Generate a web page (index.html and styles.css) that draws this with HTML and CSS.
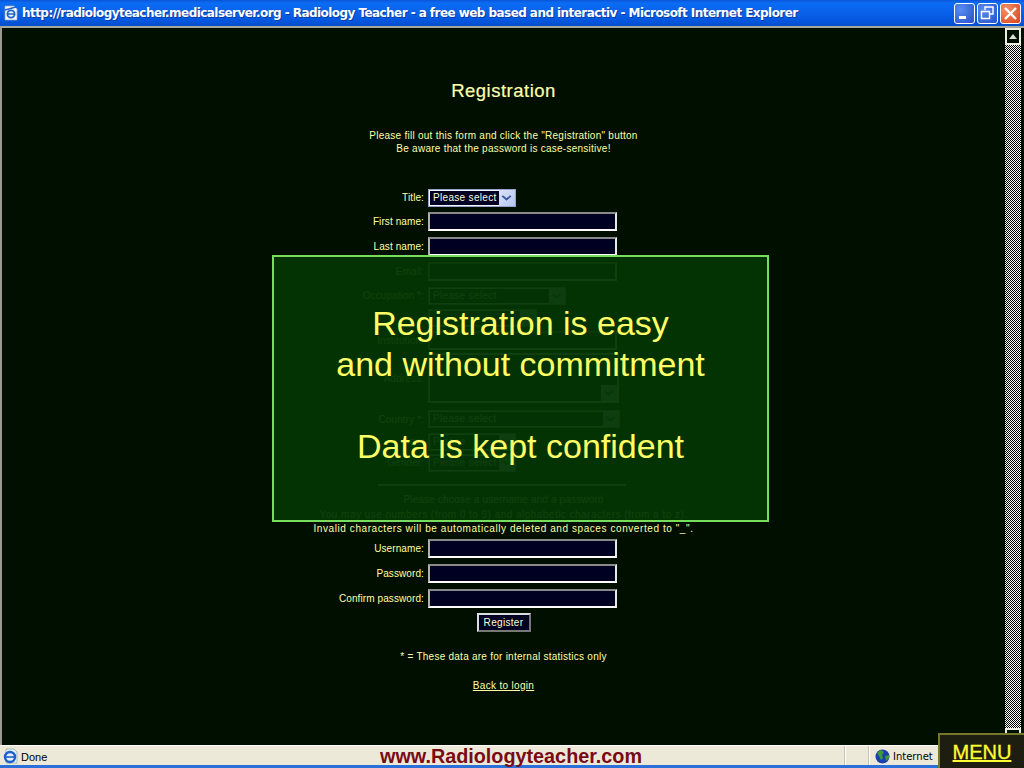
FILE: index.html
```html
<!DOCTYPE html>
<html lang="en">
<head>
<meta charset="utf-8">
<title>Radiology Teacher</title>
<link rel="stylesheet" href="styles.css">
</head>
<body>
<div class="window">
  <header class="titlebar">
    <svg class="ie-icon" width="16" height="16" viewBox="0 0 16 16"><path d="M2 1h9l3 3v11H2z" fill="#f4f6fb" stroke="#9ab" stroke-width=".7"/><circle cx="8" cy="9" r="3.600" fill="none" stroke="#1c62c8" stroke-width="1.800"/><path d="M4.500 9h7M2 5l11-3" stroke="#1c62c8" stroke-width="1.300"/></svg>
    <span class="title-text">http://radiologyteacher.medicalserver.org - Radiology Teacher - a free web based and interactiv - Microsoft Internet Explorer</span>
    <div class="win-buttons">
      <span class="win-btn"><svg width="21" height="21" viewBox="0 0 21 21"><rect x="5" y="13" width="7" height="3" fill="#fff"/></svg></span>
      <span class="win-btn"><svg width="21" height="21" viewBox="0 0 21 21"><path d="M8 7V4h8v7h-3M4.500 8.500h8v7h-8z" fill="none" stroke="#fff" stroke-width="1.400"/></svg></span>
      <span class="win-btn close"><svg width="21" height="21" viewBox="0 0 21 21"><path d="M5 5l11 11M16 5L5 16" stroke="#fff" stroke-width="2.400"/></svg></span>
    </div>
  </header>
  <div class="viewport">
    <main class="page">
      <h1 class="heading">Registration</h1>
      <p class="intro">Please fill out this form and click the "Registration" button<br>Be aware that the password is case-sensitive!</p>
      <form class="form">
        <div class="row r-23"><label>Title:</label><div class="select w88"><span>Please select</span><i class="arrow"></i></div></div>
        <div class="row"><label>First name:</label><div class="input"></div></div>
        <div class="row"><label>Last name:</label><div class="input"></div></div>
        <div class="row"><label>Email:</label><div class="input"></div></div>
        <div class="row r-23"><label>Occupation *:</label><div class="select w138"><span>Please select</span><i class="arrow"></i></div></div>
        <div class="row r-21"><label></label><div class="select w108"><span></span><i class="arrow"></i></div></div>
        <div class="row"><label>Institution:</label><div class="input"></div></div>
        <div class="row r-area"><label>Address:</label><div class="textarea"><i class="arrow"></i></div></div>
        <div class="row r-28"><label>Country *:</label><div class="select w192"><span>Please select</span><i class="arrow"></i></div></div>
        <div class="row r-21"><label>Age:</label><div class="select w88"><span>Please</span><i class="arrow"></i></div></div>
        <div class="row r-21"><label>Gender:</label><div class="select w88"><span>Please select</span><i class="arrow"></i></div></div>
        <hr class="rule">
        <p class="notes"><span class="n1">Please choose a username and a password</span><br><span class="n2">You may use numbers (from 0 to 9) and alphabetic characters (from a to z).</span><br><span class="n3">Invalid characters will be automatically deleted and spaces converted to "_".</span></p>
        <div class="row"><label>Username:</label><div class="input"></div></div>
        <div class="row"><label>Password:</label><div class="input"></div></div>
        <div class="row"><label>Confirm password:</label><div class="input"></div></div>
        <div class="submit"><button type="button" class="register">Register</button></div>
      </form>
      <p class="footnote">* = These data are for internal statistics only</p>
      <a class="back" href="#">Back to login</a>
    </main>
    <div class="scrollbar">
      <span class="sb-btn"><i class="tri-up"></i></span>
      <span class="sb-track"></span>
      <span class="sb-btn"></span>
    </div>
  </div>
  <footer class="statusbar">
    <svg class="st-icon" width="16" height="16" viewBox="0 0 16 16"><path d="M3 1h8l3 3v11H3z" fill="#e8eef8" stroke="#8aa" stroke-width=".7"/><circle cx="7" cy="9" r="5" fill="none" stroke="#1c62c8" stroke-width="2.400"/><path d="M3 9h8" stroke="#1c62c8" stroke-width="1.600"/></svg>
    <span class="done">Done</span>
    <span class="st-cell c1"></span><span class="st-cell c2"></span>
    <span class="zone"><svg width="15" height="15" viewBox="0 0 15 15"><circle cx="7.500" cy="7.500" r="7" fill="#1b3fb0"/><path d="M2 4l4-3 3 2-2 3 1 3-2 2-2-4zM10 7l4-1v3l-3 3z" fill="#3f9a3a"/></svg>Internet</span>
  </footer>
  <div class="bluestrip"></div>
</div>
<div class="overlay">
  <p>Registration is easy<br>and without commitment</p>
  <p>Data is kept confident</p>
</div>
<div class="site-name">www.Radiologyteacher.com</div>
<a class="menu" href="#">MENU</a>
</body>
</html>
```
FILE: styles.css
```css
* { box-sizing: border-box; }
html, body { margin: 0; padding: 0; height: 768px; overflow: hidden; }
body { position: relative; width: 1024px; font-family: "Liberation Sans", sans-serif; background: #000; }
.window { display: flex; flex-direction: column; height: 768px; }

.titlebar { height: 26px; flex: none; display: flex; align-items: center; padding-left: 3px; color: #fff;
  background: linear-gradient(#0a55d8 0, #0a6cf4 3px, #0a62ea 12px, #0454dc 22px, #0450c8 26px); }
.ie-icon { flex: none; }
.title-text { margin-left: 3px; font: bold 12px "DejaVu Sans", sans-serif; letter-spacing: -.555px; white-space: nowrap; text-shadow: 1px 1px #0a3aa0; }
.win-buttons { margin-left: auto; display: flex; gap: 2px; padding-right: 3px; }
.win-btn { width: 21px; height: 21px; border: 1px solid #fff; border-radius: 3px; display: block; overflow: hidden;
  background: radial-gradient(circle at 30% 30%, #5a8cf0, #2450c8); }
.win-btn svg { display: block; margin: -1px; }
.close { background: radial-gradient(circle at 30% 30%, #f0906a, #d8431c); }

.viewport { flex: 1; min-height: 0; display: flex; background: #000f00; border-top: 2px solid #a8a89c; border-left: 2px solid #9a9a90; padding-right: 3px; }
.page { flex: 1; min-width: 0; color: #ffffaa; font: 10px "Liberation Sans", sans-serif; text-align: center; }
.heading { margin: 50px 0 0; font: 400 18.500px/26px "Liberation Sans", sans-serif; letter-spacing: .5px; -webkit-text-stroke: .2px #ffffaa; }
.intro { margin: 25px 0 0; line-height: 13px; letter-spacing: .255px; }
.form { margin-top: 31px; }
.row { display: flex; gap: 4px; height: 25px; align-items: center; }
.row label { width: 422px; flex: none; text-align: right; letter-spacing: .1px; }
.input { width: 189px; height: 19px; background: #000022; border: 2px solid; border-color: #8a8a8a #e8e8e8 #fff #b0b0b0; }
.select { height: 18px; display: flex; background: #000022; border: 1px solid #93a3c8; box-shadow: inset 0 0 0 1px #f4f4ff; letter-spacing: .32px; line-height: 16px; text-align: left; color: #ffffdd; }
.select span { flex: 1; padding-left: 4px; white-space: nowrap; overflow: hidden; }
.arrow { width: 16px; flex: none; background: linear-gradient(135deg, #dbe4fa, #b4c4ee); position: relative; }
.arrow::after { content: ""; position: absolute; left: 4px; top: 3px; width: 5px; height: 5px; border-right: 2px solid #3a5a9c; border-bottom: 2px solid #3a5a9c; transform: scaleY(.8) rotate(45deg); }
.w88 { width: 88px; }
.w108 { width: 109px; }
.w138 { width: 138px; }
.w192 { width: 192px; }
.r-23 { height: 23px; }
.r-21 { height: 21px; }
.r-28 { height: 28px; padding-top: 4px; }
.r-area { height: 50px; }
.textarea { width: 191px; height: 50px; border: 2px solid #e8e8e8; background: #000022; display: flex; justify-content: flex-end; align-items: flex-end; }
.textarea .arrow { height: 16px; }
.rule { width: 248px; margin: 11px 0 0 376px; border: 0; border-top: 2px solid #cfcfa0; }
.notes { margin: 7px 0 0; height: 42.500px; line-height: 14.500px; }
.n1 { letter-spacing: .14px; }
.n2 { letter-spacing: .47px; }
.n3 { letter-spacing: .576px; }
.submit { height: 24px; display: flex; justify-content: center; align-items: center; }
.register { width: 54px; height: 19px; padding: 0; background: #000022; color: #ffffcc; font: 10px "Liberation Sans", sans-serif; letter-spacing: .32px; border: 2px solid; border-color: #ddd #777 #777 #ddd; }
.footnote { margin: 15px 0 0; line-height: 13px; letter-spacing: .25px; }
.back { display: inline-block; margin-top: 16px; color: #ffffaa; letter-spacing: .32px; line-height: 13px; }

.scrollbar { width: 16px; flex: none; display: flex; flex-direction: column; }
.sb-btn { height: 17px; flex: none; border: 2px solid #ecece0; background: #000f00; display: flex; align-items: center; justify-content: center; }
.tri-up { border: 4px solid transparent; border-top: 0; border-bottom: 5px solid #dcdccc; }
.sb-track { flex: 1; background: repeating-conic-gradient(#fff 0 25%, #000 0 50%) 0 0 / 2px 2px; }

.statusbar { height: 20px; flex: none; display: flex; align-items: center; padding-left: 3px; background: #ece9d8; border-top: 1px solid #fff; color: #000; font: 11px "Liberation Sans", sans-serif; position: relative; }
.done { margin-left: 2px; margin-top: 2px; font-size: 11px; }
.st-cell { position: absolute; top: 0; bottom: 0; border-left: 1px solid #c8c5b2; border-right: 1px solid #fff; width: 2px; }
.c1 { left: 844px; }
.c2 { left: 868px; }
.zone { position: absolute; left: 875px; top: 3px; display: flex; align-items: center; gap: 3px; font-family: "DejaVu Sans", sans-serif; font-size: 10px; }
.bluestrip { height: 3px; flex: none; background: #2a70d8; }

.overlay { position: absolute; left: 272px; top: 255px; width: 497px; height: 267px; padding-top: 46px; background: rgba(3, 54, 3, .95); border: 2px solid #78dc5c; color: #ffff66; font: 34px/41px "Liberation Sans", sans-serif; text-align: center; }
.overlay p { margin: 0 0 41px; }
.site-name { position: absolute; left: 380px; top: 744px; color: #7a0a14; font: bold 19.800px/24px "Liberation Sans", sans-serif; }
.menu { position: absolute; left: 938px; top: 733px; width: 86px; height: 35px; background: #1e1e10; border: 2px solid #77772a; border-right: 0; border-bottom: 0; color: #ffff33; font: 20px/35px "Liberation Sans", sans-serif; -webkit-text-stroke: .3px #ffff33; text-align: center; }
```
